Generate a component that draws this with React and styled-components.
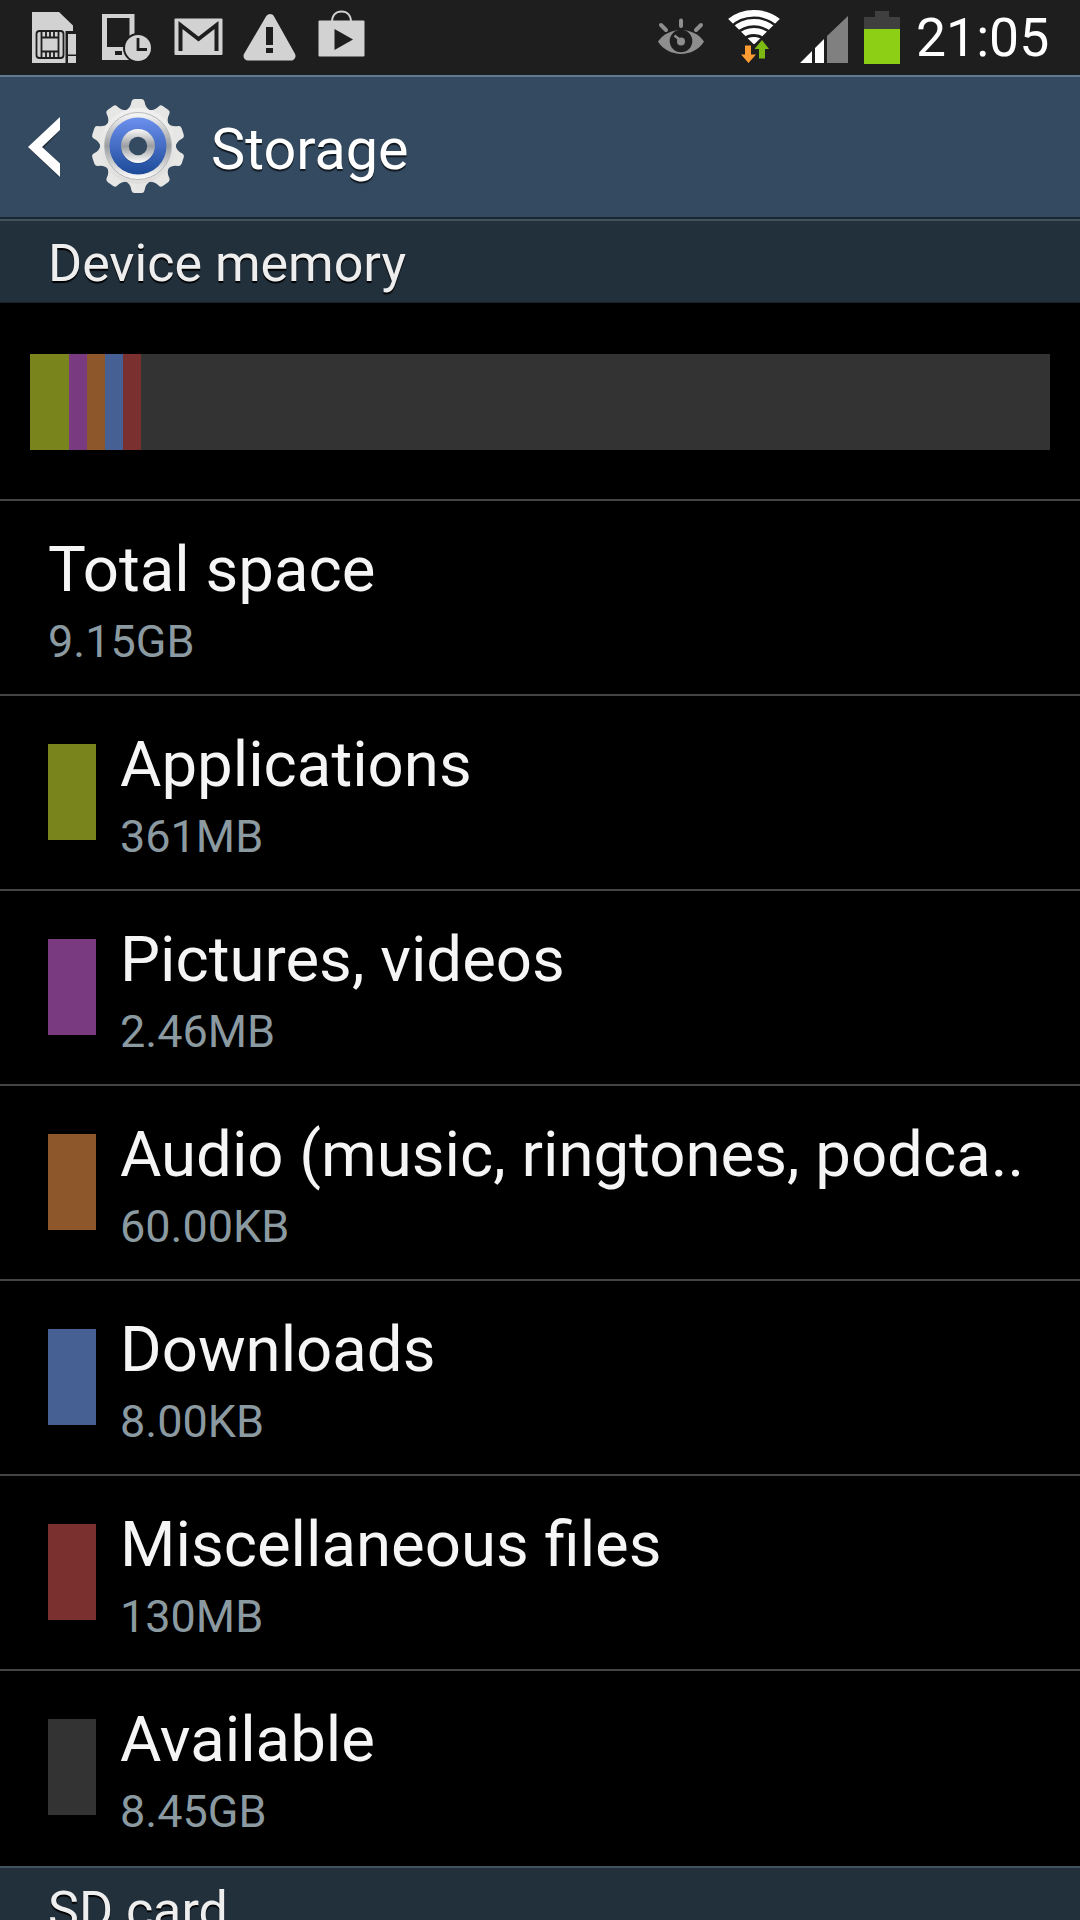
import React from 'react'
import styled, { createGlobalStyle } from 'styled-components'

const usage = [
  { name: 'Applications', size: '361MB', color: '#79841c', width: 39 },
  { name: 'Pictures, videos', size: '2.46MB', color: '#7a3a80', width: 18 },
  { name: 'Audio (music, ringtones, podca..', size: '60.00KB', color: '#8e572b', width: 18 },
  { name: 'Downloads', size: '8.00KB', color: '#466093', width: 18 },
  { name: 'Miscellaneous files', size: '130MB', color: '#7b3030', width: 18 },
  { name: 'Available', size: '8.45GB', color: '#333333' },
]

const SimIcon = () => (
  <svg width="48" height="54" viewBox="0 0 48 54">
    <path d="M1 1H28L42 14.500V20H34.500V52H1Z" fill="#d2d2d2" />
    <g fill="none" stroke="#1e1e1e" strokeWidth="1.800">
      <rect x="5.500" y="20" width="27" height="27" rx="3" />
      <path d="M10.500 20V47M27.500 20V47M10.500 26.500H27.500M10.500 40.500H27.500M15 20V26.500M19 20V26.500M23 20V26.500M15 40.500V47M19 40.500V47M23 40.500V47" />
    </g>
    <path d="M37 23H45V43.500H37ZM37 45H45V52H37Z" fill="#d2d2d2" />
  </svg>
)

const DeviceClockIcon = () => (
  <svg width="50" height="50" viewBox="0 0 50 50">
    <path fillRule="evenodd" d="M0 1H32.500V47H0ZM5 5V34H27.500V5ZM13 38H20V42H13Z" fill="#d2d2d2" />
    <path d="M13 38H20V42H13Z" fill="#1e1e1e" />
    <circle cx="36" cy="35" r="15" fill="#1e1e1e" />
    <circle cx="36" cy="35" r="13" fill="#d2d2d2" />
    <path d="M36 25V36.500H45" fill="none" stroke="#1e1e1e" strokeWidth="2.800" />
  </svg>
)

const MailIcon = () => (
  <svg width="49" height="38" viewBox="0 0 49 38">
    <rect x=".5" y=".5" width="48" height="36.500" rx="1" fill="#d2d2d2" />
    <path d="M6.500 33V7L24.500 21L42.500 7V33" fill="none" stroke="#1e1e1e" strokeWidth="4" />
  </svg>
)

const WarningIcon = () => (
  <svg width="54" height="50" viewBox="0 0 54 50">
    <path d="M27 6.500L48 44H5Z" fill="#d2d2d2" stroke="#d2d2d2" strokeWidth="9" strokeLinejoin="round" />
    <path d="M23 15H30V33H23ZM23 36H30V41H23Z" fill="#1e1e1e" />
  </svg>
)

const PlayStoreIcon = () => (
  <svg width="47" height="47" viewBox="0 0 47 47">
    <path d="M14 12C14 5 18 1.500 23.500 1.500S33 5 33 12" fill="none" stroke="#d2d2d2" strokeWidth="2" />
    <rect x=".5" y="10.500" width="46" height="36" rx="1" fill="#d2d2d2" />
    <path d="M16.500 19L35 29.500L16.500 40Z" fill="#1e1e1e" />
  </svg>
)

const EyeIcon = () => (
  <svg width="46" height="37" viewBox="0 0 46 37">
    <path d="M0 23.500C10 8 36 8 46 23.500C36 40 10 40 0 23.500Z" fill="#8e8e8e" />
    <circle cx="23" cy="23" r="11.300" fill="#1e1e1e" />
    <circle cx="23" cy="23.500" r="4" fill="#8e8e8e" />
    <path d="M22 22L16.500 17.500" stroke="#8e8e8e" strokeWidth="2.500" />
    <path d="M3 7L8 12M43 7L38 12M23 2.500V8" stroke="#8e8e8e" strokeWidth="4" strokeLinecap="round" />
  </svg>
)

const WifiIcon = () => (
  <svg width="52" height="54" viewBox="0 0 52 54">
    <clipPath id="fan">
      <path d="M26 34.500L-9 0V-10H61V0Z" />
    </clipPath>
    <g clipPath="url(#fan)" fill="none" stroke="#fff">
      <circle cx="26" cy="42" r="38.700" strokeWidth="6.600" />
      <circle cx="26" cy="42" r="29.800" strokeWidth="6.200" />
      <circle cx="26" cy="42" r="21" strokeWidth="6" />
      <circle cx="26" cy="42" r="11.500" strokeWidth="7" />
    </g>
    <path d="M17 35.500H23V44.500H28L20.500 53L13 44.500H17Z" fill="#fd9c33" />
    <path d="M31 48.500V39H26.500L34 30L41 39H37V48.500Z" fill="#7db913" />
  </svg>
)

const SignalIcon = () => (
  <svg width="48" height="48" viewBox="0 0 48 48">
    <path d="M0 47L12 35V47ZM15 32L24 23V47H15Z" fill="#fff" />
    <path d="M27 20L48 0V47H27Z" fill="#808080" />
  </svg>
)

const BatteryIcon = () => (
  <svg width="36" height="53" viewBox="0 0 36 53">
    <path d="M11 0H25V6H36V18H0V6H11Z" fill="#3f3f3f" />
    <path d="M0 18H36V53H0Z" fill="#8dcf15" />
  </svg>
)

const teeth = [0, 36, 72, 108, 144, 180, 216, 252, 288, 324]

const GearIcon = () => (
  <svg width="96" height="98" viewBox="0 0 96 98">
    <defs>
      <linearGradient id="metal" x1="0" y1="0" x2="0" y2="1">
        <stop offset="0" stopColor="#f0f0f0" />
        <stop offset="1" stopColor="#dedddc" />
      </linearGradient>
      <linearGradient id="ring" x1="0" y1="0" x2="0" y2="1">
        <stop offset="0" stopColor="#fafafa" />
        <stop offset=".5" stopColor="#9a9da1" />
        <stop offset="1" stopColor="#fdfdfd" />
      </linearGradient>
      <linearGradient id="blue" x1="0" y1="0" x2="0" y2="1">
        <stop offset="0" stopColor="#6c90ee" />
        <stop offset="1" stopColor="#1c4a98" />
      </linearGradient>
    </defs>
    <g fill="#e6e6e5">
      {teeth.map(angle => (
        <path key={angle} transform={`rotate(${angle} 48 48)`} d="M35 13Q40.500 10.500 41.500 3.500Q42 1 44.500 1H51.500Q54 1 54.500 3.500Q55.500 10.500 61 13Z" />
      ))}
    </g>
    <circle cx="48" cy="48" r="38" fill="url(#metal)" />
    <circle cx="48" cy="48" r="33.500" fill="url(#ring)" stroke="#b9b9b9" strokeWidth="1" />
    <circle cx="48" cy="48" r="28.500" fill="url(#blue)" />
    <circle cx="48" cy="49" r="17" fill="#1d3f86" opacity=".6" />
    <circle cx="48" cy="48" r="17" fill="url(#ring)" />
    <circle cx="48" cy="48" r="9.200" fill="#344a60" />
  </svg>
)

const App = () => {
  return (
    <>
      <GlobalStyle />
      <Screen>
        <StatusBar>
          <Notifications>
            <SimIcon />
            <DeviceClockIcon />
            <MailIcon />
            <WarningIcon />
            <PlayStoreIcon />
          </Notifications>
          <Indicators>
            <EyeIcon />
            <WifiIcon />
            <SignalIcon />
            <BatteryIcon />
            <Clock>21:05</Clock>
          </Indicators>
        </StatusBar>
        <ActionBar>
          <svg width="34" height="62" viewBox="0 0 34 62">
            <path d="M1 31.500L32 1V14L15 31.500L32 48V61Z" fill="#1f2d3b" />
            <path d="M0 30L32 0V13L14 30L32 46.500V60Z" fill="#fff" />
          </svg>
          <GearIcon />
          <Title>Storage</Title>
        </ActionBar>
        <SectionHeader>Device memory</SectionHeader>
        <Chart>
          <Bar>
            {usage.filter(item => item.width).map(item => (
              <Segment key={item.name} $color={item.color} $width={item.width} />
            ))}
          </Bar>
        </Chart>
        <Row>
          <div>
            <Name>Total space</Name>
            <Size>9.15GB</Size>
          </div>
        </Row>
        {usage.map(item => (
          <Row key={item.name}>
            <Swatch $color={item.color} />
            <div>
              <Name>{item.name}</Name>
              <Size>{item.size}</Size>
            </div>
          </Row>
        ))}
        <SectionHeader>SD card</SectionHeader>
      </Screen>
    </>
  )
}

export default App

const GlobalStyle = createGlobalStyle`
  *{
    box-sizing: border-box;
  }
  body{
    margin: 0;
    background-color: #000;
    font-family: Roboto, 'Noto Sans', sans-serif;
  }
  svg{
    display: block;
    flex-shrink: 0;
  }
`

const Screen = styled.main`
  width: 1080px;
  height: 1920px;
  overflow: hidden;
  background-color: #000;
`

const StatusBar = styled.header`
  display: flex;
  justify-content: space-between;
  height: 75px;
  padding: 0 31px;
  background-color: #1e1e1e;
`

const Notifications = styled.div`
  display: flex;
  align-items: flex-start;
  svg:nth-child(1){ margin-top: 11px; }
  svg:nth-child(2){ margin: 13px 0 0 23px; }
  svg:nth-child(3){ margin: 18px 0 0 22px; }
  svg:nth-child(4){ margin: 12px 0 0 20px; }
  svg:nth-child(5){ margin: 10px 0 0 21px; }
`

const Indicators = styled.div`
  display: flex;
  align-items: flex-start;
  svg:nth-child(1){ margin-top: 18px; }
  svg:nth-child(2){ margin: 10px 0 0 24px; }
  svg:nth-child(3){ margin: 16px 0 0 20px; }
  svg:nth-child(4){ margin: 11px 0 0 16px; }
`

const Clock = styled.span`
  width: 133px;
  margin-left: 16px;
  color: #fff;
  font-size: 53.5px;
  line-height: 75px;
`

const ActionBar = styled.div`
  display: flex;
  align-items: flex-start;
  height: 144px;
  padding: 0 28px;
  border-top: 2px solid #5f7b93;
  border-bottom: 2px solid #1a2632;
  background-color: #344a60;
  svg:nth-child(1){ margin-top: 40px; }
  svg:nth-child(2){ margin: 21px 0 0 28px; }
`

const Title = styled.h1`
  margin: 0 0 0 25px;
  color: #fff;
  font-size: 57.5px;
  font-weight: 400;
  line-height: 146px;
  text-shadow: 0 2px 1px #10181f;
`

const SectionHeader = styled.h2`
  height: 84px;
  margin: 0;
  padding-left: 48px;
  border-top: 2px solid #41525f;
  border-bottom: 1px solid #16222c;
  background-color: #22303c;
  color: #eee;
  font-size: 52px;
  font-weight: 400;
  line-height: 85px;
  text-shadow: 0 2px 1px #000;
`

const Chart = styled.div`
  height: 196px;
  padding: 51px 30px 0;
`

const Bar = styled.div`
  display: flex;
  height: 96px;
  background-color: #333;
`

const Segment = styled.div`
  width: ${props => props.$width}px;
  background-color: ${props => props.$color};
`

const Row = styled.div`
  display: flex;
  align-items: flex-start;
  gap: 24px;
  height: 195px;
  padding: 31px 48px 0;
  border-top: 2px solid #444;
  &:last-of-type{
    height: 197px;
  }
`

const Swatch = styled.div`
  flex-shrink: 0;
  width: 48px;
  height: 96px;
  margin-top: 17px;
  background-color: ${props => props.$color};
`

const Name = styled.div`
  color: #f5f5f5;
  font-size: 63.5px;
  line-height: 75px;
  white-space: nowrap;
`

const Size = styled.div`
  margin-top: 3px;
  color: #8b9aa1;
  font-size: 45px;
  line-height: 64px;
`
